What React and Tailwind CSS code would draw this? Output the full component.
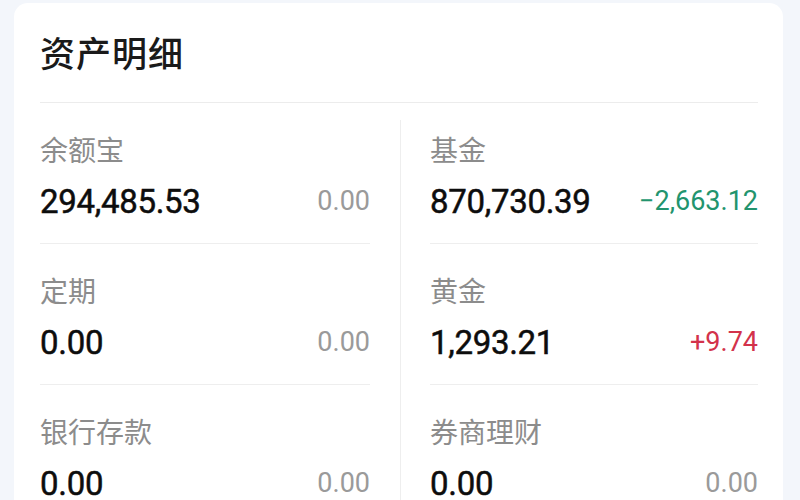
const left = [
  { label: "余额宝", value: "294,485.53", change: "0.00", tone: "zero" },
  { label: "定期", value: "0.00", change: "0.00", tone: "zero" },
  { label: "银行存款", value: "0.00", change: "0.00", tone: "zero" },
];

const right = [
  { label: "基金", value: "870,730.39", change: "−2,663.12", tone: "down" },
  { label: "黄金", value: "1,293.21", change: "+9.74", tone: "up" },
  { label: "券商理财", value: "0.00", change: "0.00", tone: "zero" },
];

const toneClass = {
  zero: "text-[#9a9a9a]",
  down: "text-[#22946e]",
  up: "text-[#d3324b]",
};

const AssetRow = ({ item, last }) => (
  <div className={`h-[141px] flex flex-col ${last ? "" : "border-b border-[#eeeeee]"}`}>
    <div className="mt-[31px] h-[30px] flex items-center text-[28px] leading-none text-[#8c8c8c] font-['Noto_Sans_CJK_SC',sans-serif]">
      {item.label}
    </div>
    <div className="mt-[22px] h-[30px] flex items-center justify-between font-['Roboto',sans-serif]">
      <span className="text-[33px] leading-none font-normal text-[#0d0d0d] tracking-[-0.3px] [-webkit-text-stroke:0.5px_#0d0d0d]">
        {item.value}
      </span>
      <span className={`text-[27px] leading-none font-normal ${toneClass[item.tone]}`}>{item.change}</span>
    </div>
  </div>
);

const AssetColumn = ({ items }) => (
  <div className="flex flex-col">
    {items.map((item, i) => (
      <AssetRow key={item.label} item={item} last={i === items.length - 1} />
    ))}
  </div>
);

export default function App() {
  return (
    <div className="w-[800px] h-[500px] overflow-hidden bg-[#f3f6fb] pl-[14px] pr-[17px] pt-[3px]">
      <div className="bg-white rounded-t-[14px] h-[600px] pl-[26px] pr-[25px]">
        <div className="h-[100px] flex items-center border-b border-[#ececec]">
          <h1 className="mt-[-2px] text-[35px] leading-none font-medium text-[#1a1a1a] tracking-[1px] font-['Noto_Sans_CJK_SC',sans-serif]">
            资产明细
          </h1>
        </div>
        <div className="grid grid-cols-[330px_60px_1fr]">
          <AssetColumn items={left} />
          <div className="flex justify-center pt-[17px]">
            <div className="w-px bg-[#eeeeee]" />
          </div>
          <AssetColumn items={right} />
        </div>
      </div>
    </div>
  );
}
